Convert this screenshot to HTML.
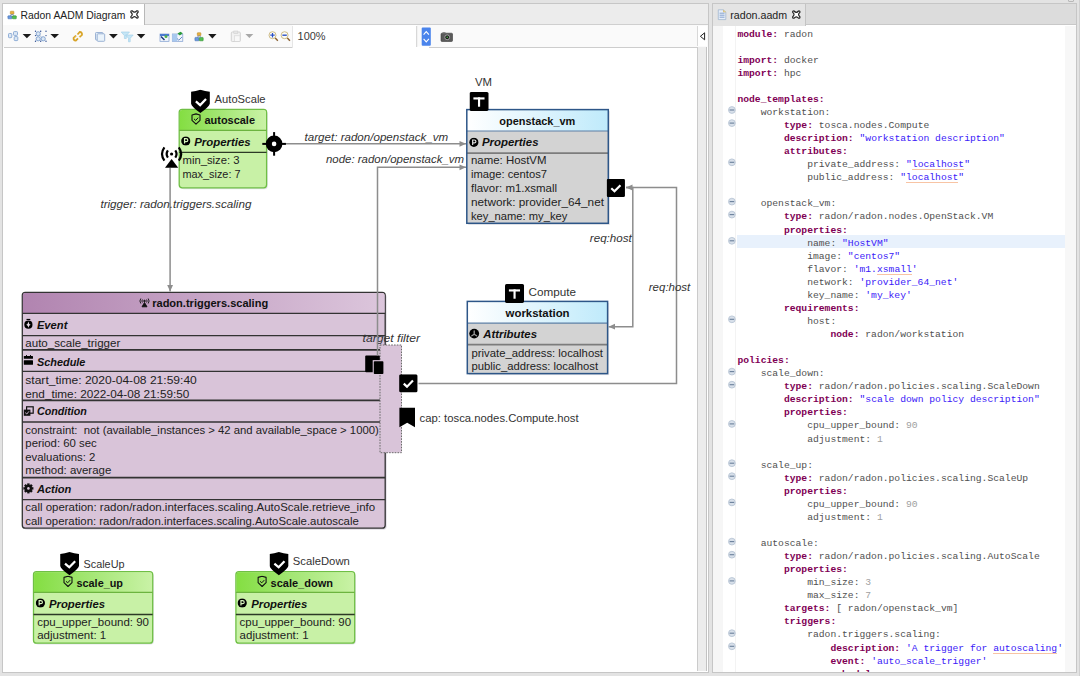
<!DOCTYPE html>
<html><head><meta charset="utf-8"><title>Radon AADM</title>
<style>
*{box-sizing:border-box}
html,body{margin:0;padding:0}
body{width:1080px;height:676px;position:relative;overflow:hidden;background:#e3e3e3;font-family:"Liberation Sans",sans-serif;}
.abs{position:absolute}
#editor{position:absolute;left:713px;top:26px;width:363px;height:646px;background:#fff;overflow:hidden}
#code{position:absolute;left:24.4px;top:1.57px;font-family:"Liberation Mono",monospace;font-size:9.7px;line-height:13.07px;white-space:pre;color:#505050}
#code .ln{height:13.07px}
#code .hl{}
#code .k{color:#7f0055;font-weight:bold}
#code .p{color:#505050}
#code .s{color:#3a20f8}
#code .u{color:#3a20f8;background:linear-gradient(#f8c4a4,#f8c4a4) no-repeat 0 10px/100% 1px}
#code .n{color:#a0a0a0}

.fold{fill:#d8e0ea;stroke:#b4c2d2;stroke-width:0.8}
.foldl{stroke:#6a7f9a;stroke-width:1.1}
</style></head>
<body>

<!-- left panel -->
<div class="abs" style="left:2px;top:3px;width:707px;height:670px;background:#fff;border:1px solid #c6c6c6"></div>
<div class="abs" style="left:3px;top:4px;width:705px;height:21px;background:#ececec;border-bottom:1px solid #cfcfcf"></div>
<div class="abs" style="left:3px;top:4px;width:142px;height:22px;background:#fff;border-right:1px solid #b8b8b8"></div>
<div class="abs" style="left:3px;top:25px;width:705px;height:22px;background:#fafafa"></div>
<div class="abs" style="left:4px;top:47px;width:693px;height:1px;background:#cdcdcd"></div>
<div class="abs" style="left:697px;top:47px;width:10px;height:624px;background:#ececec;border-left:1px solid #cbcbcb;border-right:1px solid #c2c2c2"></div>
<div class="abs" style="left:697px;top:26px;width:10px;height:20px;background:#fff;border-left:1px solid #d8d8d8"></div>
<!-- right panel -->
<div class="abs" style="left:712px;top:3px;width:365px;height:670px;background:#fff;border:1px solid #c6c6c6"></div>
<div class="abs" style="left:1079px;top:0;width:1px;height:676px;background:#d0d0d0"></div>
<div class="abs" style="left:1068px;top:-3px;width:6px;height:5px;border:1px solid #b8b8b8;border-radius:1px"></div>
<div class="abs" style="left:713px;top:4px;width:363px;height:21px;background:#dcdcdc;border-bottom:1px solid #c8c8c8"></div>
<div class="abs" style="left:713px;top:4px;width:93px;height:22px;background:#e4e4e4;border-right:1px solid #c4c4c4"></div>


<svg class="abs" style="left:0;top:0" width="1080" height="50" font-family="Liberation Sans, sans-serif">
 <text x="20.6" y="18.6" font-size="11" fill="#222" textLength="104.8" lengthAdjust="spacingAndGlyphs">Radon AADM Diagram</text>
 <text x="730.3" y="18.8" font-size="11" fill="#222" textLength="56.8" lengthAdjust="spacingAndGlyphs">radon.aadm</text>
 <g transform="translate(134.5,14.4)" stroke="#222" stroke-width="1.2" fill="#fff"><path d="M-3.6 -2.2 Q-3.9 -3.9 -2.2 -3.6 Q0 -0.9 2.2 -3.6 Q3.9 -3.9 3.6 -2.2 Q0.9 0 3.6 2.2 Q3.9 3.9 2.2 3.6 Q0 0.9 -2.2 3.6 Q-3.9 3.9 -3.6 2.2 Q-0.9 0 -3.6 -2.2 Z"/></g>
 <g transform="translate(796.3,14.6)" stroke="#222" stroke-width="1.2" fill="#fff"><path d="M-3.6 -2.2 Q-3.9 -3.9 -2.2 -3.6 Q0 -0.9 2.2 -3.6 Q3.9 -3.9 3.6 -2.2 Q0.9 0 3.6 2.2 Q3.9 3.9 2.2 3.6 Q0 0.9 -2.2 3.6 Q-3.9 3.9 -3.6 2.2 Q-0.9 0 -3.6 -2.2 Z"/></g>
 <!-- diagram tab icon -->
 <rect x="10.3" y="11.2" width="3.6" height="3" rx="0.5" fill="#e8b040" stroke="#b08020" stroke-width="0.5"/>
 <rect x="7.9" y="15.8" width="4" height="3" rx="0.5" fill="#6a9ae0" stroke="#3a64a8" stroke-width="0.5"/>
 <rect x="12.4" y="15.8" width="3.9" height="3" rx="0.5" fill="#50c050" stroke="#208020" stroke-width="0.5"/>
 <path d="M12.1 14.2 L9.9 15.8 M12.1 14.2 L14.3 15.8" stroke="#5a78b0" stroke-width="0.7"/>
 <!-- file icon -->
 <path d="M718.3 9.8 L723.5 9.8 L725.8 12.1 L725.8 19.6 L718.3 19.6 Z" fill="#e6eef9" stroke="#9ab0cc" stroke-width="0.7"/>
 <path d="M723.5 9.8 L723.5 12.1 L725.8 12.1" fill="#f0d890" stroke="#c8a850" stroke-width="0.5"/>
 <path d="M719.6 13.2 L724.5 13.2 M719.6 15.2 L724.5 15.2 M719.6 17.2 L724.5 17.2" stroke="#7a9ac8" stroke-width="0.9"/>
 <!-- collapse triangle -->
 <path d="M704.6 32.8 L700.4 36.3 L704.6 39.8 Z" fill="#fff" stroke="#222" stroke-width="1"/>
</svg>


<svg class="abs" style="left:0;top:0" width="700" height="50" font-family="Liberation Sans, sans-serif">
 <rect x="292.5" y="25" width="124" height="23" fill="#fff"/>
 <rect x="416" y="46.5" width="13" height="1.6" fill="#fff"/>
 <line x1="292.5" y1="26" x2="292.5" y2="48" stroke="#e6e6e6"/>
 <line x1="416.7" y1="26" x2="416.7" y2="47" stroke="#cfcfcf"/>
 <!-- icon 1 -->
 <g fill="#dce8f5" stroke="#86a6d2" stroke-width="0.9">
 <rect x="8.5" y="33.5" width="3.3" height="4.2" rx="0.8"/>
 <rect x="13.5" y="31.6" width="4" height="3.8" rx="0.8"/>
 <rect x="14.2" y="36.6" width="3.6" height="4" rx="0.8"/>
 </g>
 <path d="M22.6 34 L31.2 34 L26.9 38.3 Z" fill="#1a1a1a"/>
 <!-- icon 2 -->
 <path d="M38.2 33.8 L43.2 38.8" stroke="#7090c0" stroke-width="0.6"/>
 <g fill="#dce8f5" stroke="#7a9ccc" stroke-width="0.9"><circle cx="38.2" cy="33.8" r="2.1"/><circle cx="38.2" cy="38.8" r="2.1"/><circle cx="43.2" cy="38.8" r="2.1"/></g>
 <g fill="#2a4a90"><circle cx="35.5" cy="31.3" r="0.7"/><circle cx="40.7" cy="31.3" r="0.7"/><circle cx="46" cy="31.3" r="0.7"/><circle cx="35.5" cy="35.6" r="0.7"/><circle cx="46" cy="35.6" r="0.7"/><circle cx="35.5" cy="41.3" r="0.7"/><circle cx="40.7" cy="41.3" r="0.7"/><circle cx="46" cy="41.3" r="0.7"/></g>
 <path d="M50.4 34 L59 34 L54.7 38.3 Z" fill="#1a1a1a"/>
 <!-- icon 3 (orange links) -->
 <g stroke="#d8a428" stroke-width="1.8" fill="none"><path d="M76 35.5 L73.6 38 Q73.3 40.5 75.8 40.6 L78 38.3"/><path d="M79.5 37.2 L82 34.8 Q82.3 32.2 79.8 32 L77.5 34.5"/></g>
 <g stroke="#f0d070" stroke-width="0.7" fill="none"><path d="M76.4 36 L74.5 38 M79 36.8 L81 34.8"/></g>
 <!-- icon 4 -->
 <rect x="95.5" y="32.5" width="7.5" height="7.5" rx="0.8" fill="#e4edf7" stroke="#92acd0" stroke-width="0.9"/>
 <rect x="97.2" y="33.8" width="7.5" height="7.5" rx="0.8" fill="#eaf3fb" stroke="#92acd0" stroke-width="0.9"/>
 <path d="M109 34 L117.8 34 L113.4 38.5 Z" fill="#1a1a1a"/>
 <!-- icon 5 filter -->
 <path d="M121.2 32 L129.5 32 L126.3 35.6 L126.3 38.5 L124.4 38.5 L124.4 35.6 Z" fill="#c6e6f6" stroke="#9ccde8" stroke-width="0.6"/>
 <path d="M125.5 35 L133.2 35 L130.2 38.3 L130.2 41.8 L128.5 41.8 L128.5 38.3 Z" fill="#c6e6f6" stroke="#9ccde8" stroke-width="0.6"/>
 <path d="M136.9 34 L145.3 34 L141.1 38.5 Z" fill="#1a1a1a"/>
 <!-- icon 6 -->
 <rect x="160" y="34" width="9" height="7.3" fill="#f2f6fb" stroke="#7a9ad0" stroke-width="0.7"/>
 <rect x="160" y="34" width="9" height="2" fill="#4a7ad0"/>
 <path d="M161 36.5 L164.5 40" stroke="#1a3a80" stroke-width="1.5"/>
 <circle cx="166" cy="36.6" r="1.5" fill="#50b050"/>
 <!-- icon 7 -->
 <rect x="172.3" y="34" width="10.5" height="7.3" fill="#f2f6fb" stroke="#7a9ad0" stroke-width="0.7"/>
 <rect x="172.3" y="34" width="5" height="7.3" fill="#a8c8ee"/>
 <path d="M177.5 33.5 L180.5 31.8 L182.8 33.2 L179.8 35.5 Z" fill="#2a9a3a"/>
 <path d="M177 38.5 L178.8 40.2 L182 37" stroke="#5a80c0" stroke-width="0.9" fill="none"/>
 <!-- icon 8 -->
 <rect x="197.3" y="32.7" width="3.6" height="3" rx="0.5" fill="#e8b040" stroke="#b08020" stroke-width="0.5"/>
 <rect x="194.9" y="37.4" width="4" height="3.4" rx="0.5" fill="#6a9ae0" stroke="#3a64a8" stroke-width="0.5"/>
 <rect x="199.3" y="37.4" width="3.9" height="3.4" rx="0.5" fill="#50c050" stroke="#208020" stroke-width="0.5"/>
 <path d="M199.1 35.7 L197 37.4 M199.1 35.7 L201.2 37.4" stroke="#5a78b0" stroke-width="0.7"/>
 <path d="M208.2 34 L216.5 34 L212.35 38.5 Z" fill="#1a1a1a"/>
 <!-- icon 9 disabled -->
 <rect x="231.3" y="32" width="9" height="9.5" rx="1" fill="#f2f2f2" stroke="#cfcfcf" stroke-width="0.9"/>
 <rect x="233.8" y="31" width="4" height="2.4" fill="#e6e6e6" stroke="#cfcfcf" stroke-width="0.6"/>
 <rect x="234.5" y="35.8" width="5.5" height="5.5" fill="#f8f8f8" stroke="#d4d4d4" stroke-width="0.6"/>
 <path d="M245.4 34 L253.3 34 L249.35 38 Z" fill="#a8a8a8"/>
 <!-- zoom -->
 <path d="M275 37.8 L277.8 40.8" stroke="#8a6030" stroke-width="1.4"/>
 <circle cx="272.5" cy="35.2" r="3.5" fill="#fcfcf6" stroke="#c8b47a" stroke-width="0.9"/><path d="M270.3 35.2 L274.7 35.2 M272.5 33 L272.5 37.4" stroke="#2a50c8" stroke-width="1.2"/>
 <path d="M287.1 37.8 L289.9 40.8" stroke="#8a6030" stroke-width="1.4"/>
 <circle cx="284.6" cy="35.2" r="3.5" fill="#fcfcf6" stroke="#c8b47a" stroke-width="0.9"/><path d="M282.4 35.2 L286.8 35.2" stroke="#2a50c8" stroke-width="1.4"/>
 <text x="297.6" y="40.3" font-size="10.4" fill="#3a3a3a" textLength="28" lengthAdjust="spacingAndGlyphs">100%</text>
 <!-- spinner -->
 <rect x="421.7" y="27.5" width="9.1" height="18.3" rx="1" fill="#4a84ec"/>
 <path d="M423.6 34.6 L426.25 31.6 L428.9 34.6 M423.6 38.8 L426.25 41.8 L428.9 38.8" stroke="#fff" stroke-width="1.1" fill="none"/>
 <!-- camera -->
 <rect x="441" y="33.2" width="11.5" height="8.3" rx="1" fill="#5a5a5a" stroke="#3a3a3a" stroke-width="0.6"/>
 <rect x="442.5" y="32.3" width="3" height="1.3" fill="#6a6a6a"/>
 <circle cx="447.2" cy="37.3" r="2.4" fill="#1a1a1a" stroke="#c8c8c8" stroke-width="0.7"/>
 <circle cx="447.2" cy="37.3" r="0.8" fill="#50c050"/>
</svg>

<svg class="abs" style="left:0;top:0" width="1080" height="676" viewBox="0 0 1080 676" font-family="Liberation Sans, sans-serif"><defs><clipPath id="cv"><rect x="3" y="47" width="694" height="624"/></clipPath></defs><g clip-path="url(#cv)">
<defs>
 <linearGradient id="gG" x1="0" x2="1" y1="0" y2="0"><stop offset="0" stop-color="#84de42"/><stop offset="0.45" stop-color="#a2e672"/><stop offset="1" stop-color="#c9f2a6"/></linearGradient>
 <linearGradient id="gB" x1="0" x2="1" y1="0" y2="0"><stop offset="0" stop-color="#ffffff"/><stop offset="1" stop-color="#bfeafb"/></linearGradient>
 <linearGradient id="gP" x1="0" x2="1" y1="0" y2="0"><stop offset="0" stop-color="#b184b0"/><stop offset="1" stop-color="#dcc6dc"/></linearGradient>
 <symbol id="shield" viewBox="0 0 20 25"><path d="M9.6 0.2 Q14.5 1.8 19.3 2.4 L19.3 14.6 Q18.6 17.6 9.6 24.2 Q0.6 17.6 0.1 14.6 L0.1 2.4 Q4.8 1.8 9.6 0.2 Z" fill="#000"/><path d="M5 12.2 L9.4 16 L15.4 9.8" stroke="#fff" stroke-width="2.3" fill="none"/></symbol>
 <symbol id="shieldS" viewBox="0 0 10 12"><path d="M5 0.8 L9 1.9 L9 7.2 L5 11 L1 7.2 L1 1.9 Z" stroke="#111" stroke-width="1.1" fill="none" stroke-linejoin="round"/><path d="M3 5.8 L4.7 7.3 L7.2 4.6" stroke="#111" stroke-width="1" fill="none"/></symbol>
 <symbol id="ticon" viewBox="0 0 20 20"><rect x="0" y="0" width="19.5" height="19.4" rx="1.6" fill="#000"/><rect x="4" y="5.5" width="11.4" height="2.2" fill="#fff"/><rect x="8.7" y="5.5" width="2.2" height="9.6" fill="#fff"/></symbol>
 <symbol id="check" viewBox="0 0 20 20"><rect x="0" y="0" width="19.2" height="19" rx="1.6" fill="#000"/><path d="M4.8 9.8 L8.2 13 L14.5 6.6" stroke="#fff" stroke-width="2.3" fill="none"/></symbol>
 <symbol id="picon" viewBox="0 0 10 10"><circle cx="5" cy="5" r="4.8" fill="#000"/><path d="M3.7 7.7 L3.7 2.6 L5.4 2.6 Q7.1 2.6 7.1 4.1 Q7.1 5.6 5.4 5.6 L3.7 5.6" stroke="currentColor" stroke-width="1.25" fill="none"/></symbol>
</defs>
<text x="214.6" y="102.6" font-size="11" fill="#333" textLength="51.0" lengthAdjust="spacingAndGlyphs">AutoScale</text><rect x="180.4" y="110.7" width="87.4" height="78.5" rx="3.5" fill="#dcdce4" opacity="0.8"/><rect x="179.2" y="109.3" width="87.4" height="78.5" rx="3" fill="#c8f1a6" stroke="#6fbf45" stroke-width="1.3"/><path d="M179.8 130.4 L179.8 112.6 Q179.8 109.9 182.5 109.9 L263.3 109.9 Q266.0 109.9 266.0 112.6 L266.0 130.4 Z" fill="url(#gG)"/><line x1="179.2" y1="130.4" x2="266.6" y2="130.4" stroke="#6cb43f" stroke-width="1.2"/><line x1="179.2" y1="152.3" x2="266.6" y2="152.3" stroke="#2c3a26" stroke-width="1.3"/><use href="#shieldS" x="191.0" y="113.1" width="10" height="12"/><text x="204.5" y="124.3" font-size="11" fill="#111" textLength="50.5" lengthAdjust="spacingAndGlyphs" font-weight="bold">autoscale</text><use href="#picon" x="181.0" y="136.2" width="9.6" height="9.6" color="#d6f4bc"/><text x="194.2" y="145.7" font-size="11" fill="#111" textLength="56.5" lengthAdjust="spacingAndGlyphs" font-weight="bold" font-style="italic">Properties</text><text x="182.5" y="164.0" font-size="11" fill="#222" textLength="57.0" lengthAdjust="spacingAndGlyphs">min_size: 3</text><text x="182.5" y="177.5" font-size="11" fill="#222" textLength="58.0" lengthAdjust="spacingAndGlyphs">max_size: 7</text><use href="#shield" x="191" y="89.5" width="19.5" height="24.4"/><text x="83.5" y="568.3" font-size="11" fill="#333" textLength="41.0" lengthAdjust="spacingAndGlyphs">ScaleUp</text><rect x="34.7" y="573.1" width="119.2" height="71.5" rx="3.5" fill="#dcdce4" opacity="0.8"/><rect x="33.5" y="571.7" width="119.2" height="71.5" rx="3" fill="#c8f1a6" stroke="#6fbf45" stroke-width="1.3"/><path d="M34.1 592.4 L34.1 575.0 Q34.1 572.3 36.8 572.3 L149.4 572.3 Q152.1 572.3 152.1 575.0 L152.1 592.4 Z" fill="url(#gG)"/><line x1="33.5" y1="592.4" x2="152.7" y2="592.4" stroke="#6cb43f" stroke-width="1.2"/><line x1="33.5" y1="614.5" x2="152.7" y2="614.5" stroke="#2c3a26" stroke-width="1.3"/><use href="#shieldS" x="63.0" y="575.5" width="10" height="12"/><text x="76.5" y="586.7" font-size="11" fill="#111" textLength="46.5" lengthAdjust="spacingAndGlyphs" font-weight="bold">scale_up</text><use href="#picon" x="35.6" y="598.2" width="9.6" height="9.6" color="#d6f4bc"/><text x="49.0" y="607.7" font-size="11" fill="#111" textLength="56.0" lengthAdjust="spacingAndGlyphs" font-weight="bold" font-style="italic">Properties</text><text x="37.2" y="626.1" font-size="11" fill="#222" textLength="111.8" lengthAdjust="spacingAndGlyphs">cpu_upper_bound: 90</text><text x="37.2" y="639.0" font-size="11" fill="#222" textLength="69.0" lengthAdjust="spacingAndGlyphs">adjustment: 1</text><use href="#shield" x="60" y="551.7" width="19.8" height="24.4"/><text x="292.8" y="565.2" font-size="11" fill="#333" textLength="57.0" lengthAdjust="spacingAndGlyphs">ScaleDown</text><rect x="237.1" y="573.1" width="118.8" height="71.5" rx="3.5" fill="#dcdce4" opacity="0.8"/><rect x="235.9" y="571.7" width="118.8" height="71.5" rx="3" fill="#c8f1a6" stroke="#6fbf45" stroke-width="1.3"/><path d="M236.5 592.4 L236.5 575.0 Q236.5 572.3 239.2 572.3 L351.4 572.3 Q354.1 572.3 354.1 575.0 L354.1 592.4 Z" fill="url(#gG)"/><line x1="235.9" y1="592.4" x2="354.7" y2="592.4" stroke="#6cb43f" stroke-width="1.2"/><line x1="235.9" y1="614.5" x2="354.7" y2="614.5" stroke="#2c3a26" stroke-width="1.3"/><use href="#shieldS" x="257.1" y="575.5" width="10" height="12"/><text x="270.6" y="586.7" font-size="11" fill="#111" textLength="62.3" lengthAdjust="spacingAndGlyphs" font-weight="bold">scale_down</text><use href="#picon" x="237.4" y="598.2" width="9.6" height="9.6" color="#d6f4bc"/><text x="251.2" y="607.7" font-size="11" fill="#111" textLength="56.0" lengthAdjust="spacingAndGlyphs" font-weight="bold" font-style="italic">Properties</text><text x="239.6" y="626.1" font-size="11" fill="#222" textLength="111.5" lengthAdjust="spacingAndGlyphs">cpu_upper_bound: 90</text><text x="239.6" y="639.0" font-size="11" fill="#222" textLength="69.0" lengthAdjust="spacingAndGlyphs">adjustment: 1</text><use href="#shield" x="269.5" y="551.7" width="19.5" height="24.4"/><text x="475.0" y="85.6" font-size="11" fill="#333" textLength="17.0" lengthAdjust="spacingAndGlyphs">VM</text><rect x="468.3" y="111.1" width="141.5" height="113.7" fill="#e2e2e6"/><rect x="466.8" y="109.6" width="141.5" height="113.7" fill="#d3d3d3"/><rect x="466.8" y="109.6" width="141.5" height="21.4" fill="url(#gB)"/><line x1="466.8" y1="131.0" x2="608.3" y2="131.0" stroke="#5d7fa5" stroke-width="1.2"/><line x1="466.8" y1="153.2" x2="608.3" y2="153.2" stroke="#7c7c7c" stroke-width="1.8"/><rect x="466.8" y="109.6" width="141.5" height="113.7" fill="none" stroke="#2d5688" stroke-width="1.5"/><text x="499.3" y="124.9" font-size="11" fill="#111" textLength="76.0" lengthAdjust="spacingAndGlyphs" font-weight="bold">openstack_vm</text><use href="#picon" x="469.1" y="137.5" width="9.6" height="9.6" color="#dedede"/><text x="482.0" y="146.0" font-size="11" fill="#111" textLength="56.5" lengthAdjust="spacingAndGlyphs" font-weight="bold" font-style="italic">Properties</text><text x="471.0" y="164.3" font-size="11" fill="#222" textLength="75.5" lengthAdjust="spacingAndGlyphs">name: HostVM</text><text x="471.0" y="178.2" font-size="11" fill="#222" textLength="76.0" lengthAdjust="spacingAndGlyphs">image: centos7</text><text x="471.0" y="192.2" font-size="11" fill="#222" textLength="86.0" lengthAdjust="spacingAndGlyphs">flavor: m1.xsmall</text><text x="471.0" y="206.1" font-size="11" fill="#222" textLength="133.0" lengthAdjust="spacingAndGlyphs">network: provider_64_net</text><text x="471.0" y="219.8" font-size="11" fill="#222" textLength="96.3" lengthAdjust="spacingAndGlyphs">key_name: my_key</text><use href="#ticon" x="469.5" y="92" width="19.5" height="19.5"/><text x="528.6" y="296.0" font-size="11" fill="#333" textLength="47.5" lengthAdjust="spacingAndGlyphs">Compute</text><rect x="468.8" y="302.9" width="140.3" height="72.2" fill="#e2e2e6"/><rect x="467.3" y="301.4" width="140.3" height="72.2" fill="#d3d3d3"/><rect x="467.3" y="301.4" width="140.3" height="21.8" fill="url(#gB)"/><line x1="467.3" y1="323.2" x2="607.6" y2="323.2" stroke="#5d7fa5" stroke-width="1.2"/><line x1="467.3" y1="344.6" x2="607.6" y2="344.6" stroke="#7c7c7c" stroke-width="1.8"/><rect x="467.3" y="301.4" width="140.3" height="72.2" fill="none" stroke="#2d5688" stroke-width="1.5"/><text x="505.6" y="317.1" font-size="11" fill="#111" textLength="64.0" lengthAdjust="spacingAndGlyphs" font-weight="bold">workstation</text><circle cx="474.2" cy="333.6" r="4.9" fill="#000"/><path d="M474.2 334.2 L474.2 331.0 M474.2 334.2 L471.8 335.8 M474.2 334.2 L476.6 335.8" stroke="#9a9a9a" stroke-width="1.3" stroke-linecap="round"/><text x="483.2" y="338.2" font-size="11" fill="#111" textLength="53.8" lengthAdjust="spacingAndGlyphs" font-weight="bold" font-style="italic">Attributes</text><text x="471.5" y="356.5" font-size="11" fill="#222" textLength="131.5" lengthAdjust="spacingAndGlyphs">private_address: localhost</text><text x="471.5" y="369.8" font-size="11" fill="#222" textLength="126.6" lengthAdjust="spacingAndGlyphs">public_address: localhost</text><use href="#ticon" x="505" y="284" width="19.5" height="19.5"/><rect x="23.8" y="293.8" width="362.9" height="235.9" rx="3.5" fill="#e0dce4"/><rect x="22.3" y="292.3" width="362.9" height="235.9" rx="3" fill="#d9c4d9" stroke="#333" stroke-width="1.3"/><path d="M22.9 313.4 L22.9 295.3 Q22.9 292.9 25.6 292.9 L381.9 292.9 Q384.6 292.9 384.6 295.3 L384.6 313.4 Z" fill="url(#gP)"/><line x1="22.3" y1="313.4" x2="385.2" y2="313.4" stroke="#333" stroke-width="1.3"/><line x1="22.3" y1="335.6" x2="385.2" y2="335.6" stroke="#333" stroke-width="1.3"/><line x1="22.3" y1="349.9" x2="385.2" y2="349.9" stroke="#333" stroke-width="1.8"/><line x1="22.3" y1="371.3" x2="385.2" y2="371.3" stroke="#333" stroke-width="1.3"/><line x1="22.3" y1="400.3" x2="385.2" y2="400.3" stroke="#333" stroke-width="1.8"/><line x1="22.3" y1="422.0" x2="385.2" y2="422.0" stroke="#333" stroke-width="1.3"/><line x1="22.3" y1="477.7" x2="385.2" y2="477.7" stroke="#333" stroke-width="1.8"/><line x1="22.3" y1="499.7" x2="385.2" y2="499.7" stroke="#333" stroke-width="1.3"/><text x="152.2" y="307.0" font-size="11" fill="#111" textLength="116.0" lengthAdjust="spacingAndGlyphs" font-weight="bold">radon.triggers.scaling</text><g transform="translate(139,297.5)" fill="none" stroke="#111" stroke-width="0.9"><path d="M1.8 1 Q0 3.5 1.8 6"/><path d="M9.2 1 Q11 3.5 9.2 6"/><path d="M3.4 2 Q2.4 3.5 3.4 5"/><path d="M7.6 2 Q8.6 3.5 7.6 5"/><circle cx="5.5" cy="3.5" r="0.8" fill="#111"/><path d="M5.5 5 L3 9.3 L8 9.3 Z" fill="#111"/></g><text x="36.9" y="329.3" font-size="11" fill="#111" textLength="30.5" lengthAdjust="spacingAndGlyphs" font-weight="bold" font-style="italic">Event</text><text x="36.9" y="365.6" font-size="11" fill="#111" textLength="48.5" lengthAdjust="spacingAndGlyphs" font-weight="bold" font-style="italic">Schedule</text><text x="36.9" y="415.4" font-size="11" fill="#111" textLength="50.0" lengthAdjust="spacingAndGlyphs" font-weight="bold" font-style="italic">Condition</text><text x="36.9" y="493.0" font-size="11" fill="#111" textLength="34.5" lengthAdjust="spacingAndGlyphs" font-weight="bold" font-style="italic">Action</text><g fill="#000"><rect x="26.5" y="318.9" width="3.8" height="1.1"/><circle cx="28.4" cy="324.7" r="4.1"/><path d="M28.4 321.6 Q28.8 324.3 30.6 324.7 Q28.8 325.1 28.4 327.8 Q28 325.1 26.2 324.7 Q28 324.3 28.4 321.6 Z" fill="#e8dce8"/></g><g fill="#000"><rect x="23.8" y="356.1" width="9.2" height="2.6" rx="0.5"/><rect x="23.8" y="360.3" width="9.2" height="4.5" rx="0.5"/><rect x="26" y="355" width="0.9" height="1.5"/><rect x="30" y="355" width="0.9" height="1.5"/></g><g><rect x="26.6" y="406.8" width="6.6" height="6.4" fill="none" stroke="#111" stroke-width="1.2"/><rect x="23.8" y="409.6" width="6.6" height="6.2" fill="#111"/><path d="M25.2 412.6 L26.8 414 L29 411.3" stroke="#d9c4d9" stroke-width="0.9" fill="none"/></g><g transform="translate(28.4,488.4)"><circle r="3.6" fill="#111"/><g fill="#111"><rect x="-1.2" y="-5" width="2.4" height="2.6" transform="rotate(0)"/><rect x="-1.2" y="-5" width="2.4" height="2.6" transform="rotate(45)"/><rect x="-1.2" y="-5" width="2.4" height="2.6" transform="rotate(90)"/><rect x="-1.2" y="-5" width="2.4" height="2.6" transform="rotate(135)"/><rect x="-1.2" y="-5" width="2.4" height="2.6" transform="rotate(180)"/><rect x="-1.2" y="-5" width="2.4" height="2.6" transform="rotate(225)"/><rect x="-1.2" y="-5" width="2.4" height="2.6" transform="rotate(270)"/><rect x="-1.2" y="-5" width="2.4" height="2.6" transform="rotate(315)"/></g><circle r="1.3" fill="#d9c4d9"/></g><text x="25.3" y="347.1" font-size="11" fill="#222" textLength="95.0" lengthAdjust="spacingAndGlyphs" xml:space="preserve">auto_scale_trigger</text><text x="25.3" y="383.7" font-size="11" fill="#222" textLength="171.5" lengthAdjust="spacingAndGlyphs" xml:space="preserve">start_time: 2020-04-08 21:59:40</text><text x="25.3" y="397.6" font-size="11" fill="#222" textLength="164.0" lengthAdjust="spacingAndGlyphs" xml:space="preserve">end_time: 2022-04-08 21:59:50</text><text x="25.3" y="433.5" font-size="11" fill="#222" textLength="353.5" lengthAdjust="spacingAndGlyphs" xml:space="preserve">constraint:  not (available_instances &gt; 42 and available_space &gt; 1000)</text><text x="25.3" y="447.0" font-size="11" fill="#222" textLength="71.5" lengthAdjust="spacingAndGlyphs" xml:space="preserve">period: 60 sec</text><text x="25.3" y="461.0" font-size="11" fill="#222" textLength="70.0" lengthAdjust="spacingAndGlyphs" xml:space="preserve">evaluations: 2</text><text x="25.3" y="474.4" font-size="11" fill="#222" textLength="86.0" lengthAdjust="spacingAndGlyphs" xml:space="preserve">method: average</text><text x="25.3" y="511.0" font-size="11" fill="#222" textLength="349.8" lengthAdjust="spacingAndGlyphs" xml:space="preserve">call operation: radon/radon.interfaces.scaling.AutoScale.retrieve_info</text><text x="25.3" y="525.0" font-size="11" fill="#222" textLength="333.5" lengthAdjust="spacingAndGlyphs" xml:space="preserve">call operation: radon/radon.interfaces.scaling.AutoScale.autoscale</text><rect x="380" y="345" width="21.5" height="107.7" fill="#d9c4d9" stroke="#6a6a6a" stroke-width="1" stroke-dasharray="1.6 1.2"/><text x="362.5" y="341.6" font-size="11" fill="#333" textLength="57.5" lengthAdjust="spacingAndGlyphs" font-style="italic">target filter</text><rect x="365.2" y="355.6" width="14.6" height="16.7" rx="1" fill="#000"/><rect x="372.7" y="360.1" width="11.8" height="14.7" fill="#d9c4d9"/><rect x="373.8" y="361.2" width="9.6" height="12.8" rx="0.8" fill="#000"/><polyline points="285.0,143.8 466.0,143.8" fill="none" stroke="#8d8d8d" stroke-width="1.5"/><polygon points="466.0,143.8 459.5,140.9 459.5,146.7" fill="#8d8d8d"/><polyline points="377.5,355.5 377.5,167.3 466.0,167.3" fill="none" stroke="#8d8d8d" stroke-width="1.5"/><polygon points="466.0,167.3 459.5,164.4 459.5,170.2" fill="#8d8d8d"/><polyline points="170.1,167.7 170.1,291.5" fill="none" stroke="#8d8d8d" stroke-width="1.5"/><polygon points="170.1,291.5 167.2,285.0 173.0,285.0" fill="#8d8d8d"/><polyline points="626.0,187.5 632.8,187.5 632.8,326.7 608.5,326.7" fill="none" stroke="#8d8d8d" stroke-width="1.5"/><polygon points="608.5,326.7 615.0,323.8 615.0,329.6" fill="#8d8d8d"/><polyline points="418.5,383.5 676.5,383.5 676.5,187.5 626.0,187.5" fill="none" stroke="#8d8d8d" stroke-width="1.5"/><polygon points="626.0,187.5 632.5,184.6 632.5,190.4" fill="#8d8d8d"/><text x="304.6" y="141.4" font-size="11" fill="#333" textLength="143.5" lengthAdjust="spacingAndGlyphs" font-style="italic">target: radon/openstack_vm</text><text x="326.0" y="162.8" font-size="11" fill="#333" textLength="138.0" lengthAdjust="spacingAndGlyphs" font-style="italic">node: radon/openstack_vm</text><text x="100.4" y="207.6" font-size="11" fill="#333" textLength="151.0" lengthAdjust="spacingAndGlyphs" font-style="italic">trigger: radon.triggers.scaling</text><text x="589.8" y="241.8" font-size="11" fill="#333" textLength="42.0" lengthAdjust="spacingAndGlyphs" font-style="italic">req:host</text><text x="648.8" y="290.6" font-size="11" fill="#333" textLength="41.5" lengthAdjust="spacingAndGlyphs" font-style="italic">req:host</text><text x="419.6" y="421.7" font-size="11" fill="#333" textLength="159.0" lengthAdjust="spacingAndGlyphs">cap: tosca.nodes.Compute.host</text><use href="#check" x="606.6" y="178.9" width="19.2" height="19"/><use href="#check" x="399" y="374.3" width="19.4" height="19"/><path d="M399.4 407.8 L415 407.8 L415 427.3 L407.2 422.8 L399.4 427.3 Z" fill="#000"/><g transform="translate(274.1,143.9)"><circle r="8.3" fill="#000"/><rect x="-1" y="-11.8" width="2" height="23.6" fill="#000"/><rect x="-11.8" y="-1" width="23.6" height="2" fill="#000"/><circle r="2.3" fill="#fff"/></g><g transform="translate(171.6,154)" fill="none" stroke="#000" stroke-width="2.2"><path d="M-7.2 -6.6 Q-12 0 -7.2 6.6"/><path d="M7.2 -6.6 Q12 0 7.2 6.6"/><path d="M-3.7 -3.6 Q-6.2 0 -3.7 3.6"/><path d="M3.7 -3.6 Q6.2 0 3.7 3.6"/><circle r="1.6" fill="#000" stroke="none"/></g><path d="M171.6 159 L178.2 167.7 L165 167.7 Z" fill="#000"/></g></svg>

<div id="editor">
 <div class="abs" style="left:0;top:0;width:10px;height:646px;background:#f6f6f6"></div>
 <div class="abs" style="left:22px;top:0;width:1px;height:646px;background:#f3f3f3"></div>
 <div class="abs" style="left:352px;top:0;width:11px;height:646px;background:#f7f7f7"></div>
 <div class="abs" style="left:24.2px;top:209.2px;width:328px;height:13.1px;background:#e8f1fc"></div>
 <div id="code"><div class="ln"><span class="k">module:</span><span class="p"> radon</span>&#8203;</div><div class="ln">&#8203;</div><div class="ln"><span class="k">import:</span><span class="p"> docker</span>&#8203;</div><div class="ln"><span class="k">import:</span><span class="p"> hpc</span>&#8203;</div><div class="ln">&#8203;</div><div class="ln"><span class="k">node_templates:</span>&#8203;</div><div class="ln"><span class="p">    workstation:</span>&#8203;</div><div class="ln"><span class="p">        </span><span class="k">type:</span><span class="p"> tosca.nodes.Compute</span>&#8203;</div><div class="ln"><span class="p">        </span><span class="k">description:</span><span class="p"> </span><span class="s">"workstation description"</span>&#8203;</div><div class="ln"><span class="p">        </span><span class="k">attributes:</span>&#8203;</div><div class="ln"><span class="p">            private_address: </span><span class="s">"</span><span class="u">localhost</span><span class="s">"</span>&#8203;</div><div class="ln"><span class="p">            public_address: </span><span class="s">"</span><span class="u">localhost</span><span class="s">"</span>&#8203;</div><div class="ln">&#8203;</div><div class="ln"><span class="p">    openstack_vm:</span>&#8203;</div><div class="ln"><span class="p">        </span><span class="k">type:</span><span class="p"> radon/radon.nodes.OpenStack.VM</span>&#8203;</div><div class="ln"><span class="p">        </span><span class="k">properties:</span>&#8203;</div><div class="ln hl"><span class="p">            name: </span><span class="s">"HostVM"</span>&#8203;</div><div class="ln"><span class="p">            image: </span><span class="s">"centos7"</span>&#8203;</div><div class="ln"><span class="p">            flavor: </span><span class="s">'m1.</span><span class="u">xsmall</span><span class="s">'</span>&#8203;</div><div class="ln"><span class="p">            network: </span><span class="s">'provider_64_net'</span>&#8203;</div><div class="ln"><span class="p">            key_name: </span><span class="s">'my_key'</span>&#8203;</div><div class="ln"><span class="p">        </span><span class="k">requirements:</span>&#8203;</div><div class="ln"><span class="p">            host:</span>&#8203;</div><div class="ln"><span class="p">                </span><span class="k">node:</span><span class="p"> radon/workstation</span>&#8203;</div><div class="ln">&#8203;</div><div class="ln"><span class="k">policies:</span>&#8203;</div><div class="ln"><span class="p">    scale_down:</span>&#8203;</div><div class="ln"><span class="p">        </span><span class="k">type:</span><span class="p"> radon/radon.policies.scaling.ScaleDown</span>&#8203;</div><div class="ln"><span class="p">        </span><span class="k">description:</span><span class="p"> </span><span class="s">"scale down policy description"</span>&#8203;</div><div class="ln"><span class="p">        </span><span class="k">properties:</span>&#8203;</div><div class="ln"><span class="p">            cpu_upper_bound: </span><span class="n">90</span>&#8203;</div><div class="ln"><span class="p">            adjustment: </span><span class="n">1</span>&#8203;</div><div class="ln">&#8203;</div><div class="ln"><span class="p">    scale_up:</span>&#8203;</div><div class="ln"><span class="p">        </span><span class="k">type:</span><span class="p"> radon/radon.policies.scaling.ScaleUp</span>&#8203;</div><div class="ln"><span class="p">        </span><span class="k">properties:</span>&#8203;</div><div class="ln"><span class="p">            cpu_upper_bound: </span><span class="n">90</span>&#8203;</div><div class="ln"><span class="p">            adjustment: </span><span class="n">1</span>&#8203;</div><div class="ln">&#8203;</div><div class="ln"><span class="p">    autoscale:</span>&#8203;</div><div class="ln"><span class="p">        </span><span class="k">type:</span><span class="p"> radon/radon.policies.scaling.AutoScale</span>&#8203;</div><div class="ln"><span class="p">        </span><span class="k">properties:</span>&#8203;</div><div class="ln"><span class="p">            min_size: </span><span class="n">3</span>&#8203;</div><div class="ln"><span class="p">            max_size: </span><span class="n">7</span>&#8203;</div><div class="ln"><span class="p">        </span><span class="k">targets:</span><span class="p"> [ radon/openstack_vm]</span>&#8203;</div><div class="ln"><span class="p">        </span><span class="k">triggers:</span>&#8203;</div><div class="ln"><span class="p">            radon.triggers.scaling:</span>&#8203;</div><div class="ln"><span class="p">                </span><span class="k">description:</span><span class="p"> </span><span class="s">'A trigger for </span><span class="u">autoscaling</span><span class="s">'</span>&#8203;</div><div class="ln"><span class="p">                </span><span class="k">event:</span><span class="p"> </span><span class="s">'auto_scale_trigger'</span>&#8203;</div><div class="ln"><span class="p">                </span><span class="k">schedule:</span>&#8203;</div></div>
</div>
<svg class="abs" style="left:0;top:0" width="1080" height="676"><g><circle cx="731.9" cy="110.0" r="3.4" class="fold"/><line x1="729.6" y1="110.0" x2="734.2" y2="110.0" class="foldl"/><circle cx="731.9" cy="123.1" r="3.4" class="fold"/><line x1="729.6" y1="123.1" x2="734.2" y2="123.1" class="foldl"/><circle cx="731.9" cy="162.3" r="3.4" class="fold"/><line x1="729.6" y1="162.3" x2="734.2" y2="162.3" class="foldl"/><circle cx="731.9" cy="201.6" r="3.4" class="fold"/><line x1="729.6" y1="201.6" x2="734.2" y2="201.6" class="foldl"/><circle cx="731.9" cy="214.6" r="3.4" class="fold"/><line x1="729.6" y1="214.6" x2="734.2" y2="214.6" class="foldl"/><circle cx="731.9" cy="240.8" r="3.4" class="fold"/><line x1="729.6" y1="240.8" x2="734.2" y2="240.8" class="foldl"/><circle cx="731.9" cy="319.3" r="3.4" class="fold"/><line x1="729.6" y1="319.3" x2="734.2" y2="319.3" class="foldl"/><circle cx="731.9" cy="371.6" r="3.4" class="fold"/><line x1="729.6" y1="371.6" x2="734.2" y2="371.6" class="foldl"/><circle cx="731.9" cy="384.7" r="3.4" class="fold"/><line x1="729.6" y1="384.7" x2="734.2" y2="384.7" class="foldl"/><circle cx="731.9" cy="423.9" r="3.4" class="fold"/><line x1="729.6" y1="423.9" x2="734.2" y2="423.9" class="foldl"/><circle cx="731.9" cy="463.2" r="3.4" class="fold"/><line x1="729.6" y1="463.2" x2="734.2" y2="463.2" class="foldl"/><circle cx="731.9" cy="476.2" r="3.4" class="fold"/><line x1="729.6" y1="476.2" x2="734.2" y2="476.2" class="foldl"/><circle cx="731.9" cy="502.4" r="3.4" class="fold"/><line x1="729.6" y1="502.4" x2="734.2" y2="502.4" class="foldl"/><circle cx="731.9" cy="541.6" r="3.4" class="fold"/><line x1="729.6" y1="541.6" x2="734.2" y2="541.6" class="foldl"/><circle cx="731.9" cy="554.7" r="3.4" class="fold"/><line x1="729.6" y1="554.7" x2="734.2" y2="554.7" class="foldl"/><circle cx="731.9" cy="580.9" r="3.4" class="fold"/><line x1="729.6" y1="580.9" x2="734.2" y2="580.9" class="foldl"/><circle cx="731.9" cy="633.2" r="3.4" class="fold"/><line x1="729.6" y1="633.2" x2="734.2" y2="633.2" class="foldl"/><circle cx="731.9" cy="646.3" r="3.4" class="fold"/><line x1="729.6" y1="646.3" x2="734.2" y2="646.3" class="foldl"/></g></svg>

</body></html>
